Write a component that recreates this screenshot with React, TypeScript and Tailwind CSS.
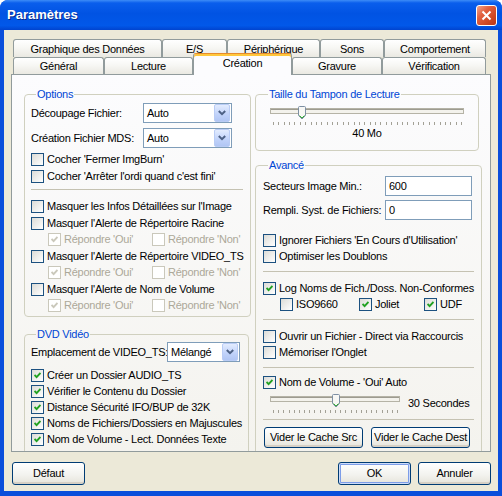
import type { ReactNode } from "react";

// Windows XP style settings dialog (ImgBurn "Création" page)

type CheckProps = {
  label: string;
  checked?: boolean;
  disabled?: boolean;
  className?: string;
};

const CheckBox = ({ checked, disabled }: { checked?: boolean; disabled?: boolean }) => (
  <span
    className={
      disabled
        ? "flex h-[13px] w-[13px] shrink-0 items-center justify-center border border-[#CAC8BB] bg-white"
        : "flex h-[13px] w-[13px] shrink-0 items-center justify-center border border-[#1C5180] bg-[linear-gradient(135deg,#DCDCD7,#FFFFFF)]"
    }
  >
    {checked && (
      <svg width="7" height="7" viewBox="0 0 7 7">
        <path
          d="M0.5 3 L2.6 5.2 L6.5 1"
          fill="none"
          stroke={disabled ? "#CAC8BB" : "#21A121"}
          strokeWidth="1.9"
        />
      </svg>
    )}
  </span>
);

const CheckRow = ({ label, checked, disabled, className = "" }: CheckProps) => (
  <div className={`flex items-center gap-[3px] whitespace-nowrap ${className}`}>
    <CheckBox checked={checked} disabled={disabled} />
    <span className={disabled ? "text-[#ACA899]" : "text-black"}>{label}</span>
  </div>
);

const Combo = ({ value, className = "" }: { value: string; className?: string }) => (
  <div
    className={`flex h-[20px] shrink-0 items-center border border-[#7F9DB9] bg-white pl-[3px] pr-px ${className}`}
  >
    <span className="flex-1">{value}</span>
    <span className="flex h-[18px] w-[16px] items-center justify-center rounded-[2px] border border-[#B9CCF5] bg-[linear-gradient(to_bottom,#E3ECFE,#C0D2FA_60%,#B1C6F4)]">
      <svg width="8" height="6" viewBox="0 0 8 6">
        <path d="M0.8 1 L4 4.2 L7.2 1" fill="none" stroke="#4D6185" strokeWidth="2" />
      </svg>
    </span>
  </div>
);

const TextBox = ({ value }: { value: string }) => (
  <div className="flex h-[20px] w-[87px] items-center border border-[#7F9DB9] bg-white pl-[3px]">
    {value}
  </div>
);

const Group = ({
  title,
  className = "",
  children,
}: {
  title: string;
  className?: string;
  children: ReactNode;
}) => (
  <fieldset className={`rounded-[4px] border border-[#D0D0BF] px-[6px] ${className}`}>
    <legend className="ml-[5px] px-px leading-[13px] text-[#0046D5]">{title}</legend>
    {children}
  </fieldset>
);

const Separator = ({ className = "" }: { className?: string }) => (
  <div className={`h-px bg-[#C5C2B2] ${className}`} />
);

const XpButton = ({
  label,
  className = "",
  primary,
}: {
  label: string;
  className?: string;
  primary?: boolean;
}) => (
  <button
    className={
      primary
        ? `flex items-center justify-center whitespace-nowrap rounded-[3px] border border-[#003C74] bg-[linear-gradient(to_bottom,#FFFFFF,#F3F3EF_55%,#E6E4DA)] shadow-[inset_0_0_0_1px_#CEDCF9,inset_0_0_0_2px_#7D9DE8] ${className}`
        : `flex items-center justify-center whitespace-nowrap rounded-[3px] border border-[#003C74] bg-[linear-gradient(to_bottom,#FFFFFF,#F3F3EF_55%,#E6E4DA)] shadow-[inset_0_-2px_0_#D6D0C5] ${className}`
    }
  >
    {label}
  </button>
);

// trackbar: channel, down-pointing thumb, tick row
const Slider = ({
  width,
  trackEnd,
  thumbX,
  ticks,
}: {
  width: number;
  trackEnd: number;
  thumbX: number;
  ticks: number;
}) => {
  const start = 7;
  const step = (trackEnd - start - 6) / (ticks - 1);
  return (
    <svg width={width} height="24" viewBox={`0 0 ${width} 24`} className="shrink-0">
      <rect x={start + 0.5} y="5.5" width={trackEnd - start - 1} height="5" fill="#F3F2EC" stroke="#B5B3A6" />
      <line x1={start + 1} y1="6.5" x2={trackEnd - 1} y2="6.5" stroke="#9D9B90" />
      <path
        d={`M${thumbX + 0.5} 4.5 Q${thumbX + 0.5} 3.5 ${thumbX + 1.5} 3.5 H${thumbX + 6.5} Q${thumbX + 7.5} 3.5 ${thumbX + 7.5} 4.5 V12.5 L${thumbX + 4} 16 L${thumbX + 0.5} 12.5 Z`}
        fill="#F7F7F4"
        stroke="#7D8FA3"
      />
      <path
        d={`M${thumbX + 1.5} 12.5 L${thumbX + 4} 15 L${thumbX + 6.5} 12.5`}
        fill="none"
        stroke="#35B035"
      />
      {Array.from({ length: ticks }).map((_, i) => (
        <line
          key={i}
          x1={start + 3 + Math.round(i * step) + 0.5}
          y1="19"
          x2={start + 3 + Math.round(i * step) + 0.5}
          y2="22"
          stroke="#A3A196"
        />
      ))}
    </svg>
  );
};

const topTabs = [
  { label: "Graphique des Données", w: "w-[149px]" },
  { label: "E/S", w: "w-[65px]" },
  { label: "Périphérique", w: "w-[93px]" },
  { label: "Sons", w: "w-[64px]" },
  { label: "Comportement", w: "w-[102px]" },
];

const bottomTabs = [
  { label: "Général", w: "w-[91px]" },
  { label: "Lecture", w: "w-[89px]" },
  { label: "Création", w: "w-[99px]", active: true },
  { label: "Gravure", w: "w-[90px]" },
  { label: "Vérification", w: "w-[104px]" },
];

const tabIdle =
  "flex h-full items-center justify-center rounded-t-[3px] border border-b-0 border-[#919B9C] bg-[linear-gradient(to_bottom,#FFFFFF,#F7F7F4_45%,#EAE9E2)]";
const tabActive =
  "relative z-10 -mb-px flex h-[22px] items-start justify-center rounded-t-[3px] border border-b-0 border-[#919B9C] border-t-[#E68B2C] bg-[#FCFCFE] pt-[3px] shadow-[inset_0_2px_0_#FFC73C]";

const App = () => {
  return (
    <div className="flex h-[496px] w-[502px] flex-col overflow-hidden rounded-t-[8px] bg-[#0A4EDB] font-['Liberation_Sans',Arial,sans-serif] text-[11px] leading-[13px] tracking-[-0.25px] text-black">
      {/* title bar */}
      <div className="flex h-[30px] shrink-0 items-center bg-[linear-gradient(to_bottom,#3D8CF7_0%,#0A5EEC_10%,#0153E3_45%,#0158E9_85%,#0044CF_100%)] pl-[7px] pr-[5px]">
        <span className="flex-1 text-[13px] font-bold leading-[16px] tracking-normal text-white [text-shadow:1px_1px_0_#0B2B8C]">
          Paramètres
        </span>
        <div className="flex h-[21px] w-[21px] items-center justify-center rounded-[3px] border border-white bg-[linear-gradient(135deg,#F2A58C_0%,#E2603F_35%,#CC4520_75%,#B9371A_100%)]">
          <svg width="11" height="11" viewBox="0 0 11 11">
            <path d="M1.5 1.5 L9.5 9.5 M9.5 1.5 L1.5 9.5" stroke="#FFFFFF" strokeWidth="2" />
          </svg>
        </div>
      </div>

      {/* dialog body */}
      <div className="mx-[4px] mb-[5px] flex flex-1 flex-col bg-[#ECE9D8] px-[7px] pt-[9px]">
        {/* tab strip */}
        <div className="flex h-[18px] pl-[2px]">
          {topTabs.map((t) => (
            <div key={t.label} className={`${tabIdle} ${t.w} pt-px`}>
              {t.label}
            </div>
          ))}
        </div>
        <div className="flex h-[17px] items-end pl-[2px]">
          {bottomTabs.map((t) =>
            t.active ? (
              <div key={t.label} className={`${tabActive} ${t.w}`}>
                {t.label}
              </div>
            ) : (
              <div key={t.label} className={`${tabIdle} ${t.w}`}>
                {t.label}
              </div>
            ),
          )}
        </div>

        {/* tab page */}
        <div className="flex h-[378px] gap-[7px] overflow-hidden border border-[#919B9C] bg-[linear-gradient(to_bottom,#FCFCFE,#F4F3EE)] pl-[12px] pt-[13px]">
          {/* left column */}
          <div className="flex w-[224px] shrink-0 flex-col">
            <Group title="Options" className="pb-[2px]">
              <div className="mt-[2px] flex items-center">
                <span className="w-[112px] shrink-0 whitespace-nowrap">Découpage Fichier:</span>
                <Combo value="Auto" className="w-[89px]" />
              </div>
              <div className="mt-[5px] flex items-center">
                <span className="w-[112px] shrink-0 whitespace-nowrap">Création Fichier MDS:</span>
                <Combo value="Auto" className="w-[89px]" />
              </div>
              <CheckRow label="Cocher 'Fermer ImgBurn'" className="mt-[3px] h-[17px]" />
              <CheckRow label="Cocher 'Arrêter l'ordi quand c'est fini'" className="h-[17px]" />
              <Separator className="mr-px mt-[4px]" />
              <CheckRow label="Masquer les Infos Détaillées sur l'Image" className="mt-[8.5px] h-[16.5px]" />
              <CheckRow label="Masquer l'Alerte de Répertoire Racine" className="h-[16.5px]" />
              <div className="flex h-[16.5px] pl-[17px]">
                <CheckRow label="Répondre 'Oui'" checked disabled className="w-[104px]" />
                <CheckRow label="Répondre 'Non'" disabled />
              </div>
              <CheckRow label="Masquer l'Alerte de Répertoire VIDEO_TS" className="h-[16.5px]" />
              <div className="flex h-[16.5px] pl-[17px]">
                <CheckRow label="Répondre 'Oui'" checked disabled className="w-[104px]" />
                <CheckRow label="Répondre 'Non'" disabled />
              </div>
              <CheckRow label="Masquer l'Alerte de Nom de Volume" className="h-[16.5px]" />
              <div className="flex h-[16.5px] pl-[17px]">
                <CheckRow label="Répondre 'Oui'" checked disabled className="w-[104px]" />
                <CheckRow label="Répondre 'Non'" disabled />
              </div>
            </Group>

            <Group title="DVD Vidéo" className="mt-[10.5px] h-[140px] shrink-0">
              <div className="mt-[1.5px] flex items-center">
                <span className="w-[136px] shrink-0 whitespace-nowrap">Emplacement de VIDEO_TS:</span>
                <Combo value="Mélangé" className="w-[73px]" />
              </div>
              <CheckRow label="Créer un Dossier AUDIO_TS" checked className="mt-[5px] h-[16px]" />
              <CheckRow label="Vérifier le Contenu du Dossier" checked className="h-[16px]" />
              <CheckRow label="Distance Sécurité IFO/BUP de 32K" checked className="h-[16px]" />
              <CheckRow label="Noms de Fichiers/Dossiers en Majuscules" checked className="h-[16px]" />
              <CheckRow label="Nom de Volume - Lect. Données Texte" checked className="h-[16px]" />
            </Group>
          </div>

          {/* right column */}
          <div className="flex w-[224px] shrink-0 flex-col">
            <Group title="Taille du Tampon de Lecture" className="px-[7px] pb-[10px]">
              <div className="mt-[2px]">
                <Slider width={208} trackEnd={201} thumbX={35} ticks={36} />
              </div>
              <div className="text-center">40 Mo</div>
            </Group>

            <Group title="Avancé" className="mt-[8px] h-[300px] shrink-0 px-[7px]">
              <div className="mt-[4px] flex items-center">
                <span className="w-[122px] shrink-0 whitespace-nowrap">Secteurs Image Min.:</span>
                <TextBox value="600" />
              </div>
              <div className="mt-[4px] flex items-center">
                <span className="w-[122px] shrink-0 whitespace-nowrap">Rempli. Syst. de Fichiers:</span>
                <TextBox value="0" />
              </div>
              <CheckRow label="Ignorer Fichiers 'En Cours d'Utilisation'" className="mt-[12.5px] h-[16px]" />
              <CheckRow label="Optimiser les Doublons" className="h-[16px]" />
              <Separator className="mt-[6.5px]" />
              <CheckRow label="Log Noms de Fich./Doss. Non-Conformes" checked className="mt-[8.5px] h-[16px]" />
              <div className="flex h-[16px] pl-[17px]">
                <CheckRow label="ISO9660" className="w-[79px]" />
                <CheckRow label="Joliet" checked className="w-[65px]" />
                <CheckRow label="UDF" checked />
              </div>
              <Separator className="mt-[6px]" />
              <CheckRow label="Ouvrir un Fichier - Direct via Raccourcis" className="mt-[9px] h-[16px]" />
              <CheckRow label="Mémoriser l'Onglet" className="h-[16px]" />
              <Separator className="mt-[6.5px]" />
              <CheckRow label="Nom de Volume - 'Oui' Auto" checked className="mt-[6.5px] h-[16px]" />
              <div className="flex items-start gap-[4px]">
                <Slider width={141} trackEnd={137} thumbX={69} ticks={25} />
                <span className="mt-[6.5px] whitespace-nowrap">30 Secondes</span>
              </div>
              <Separator className="mt-[4px]" />
              <div className="mt-[7px] flex gap-[8px] pl-[1px]">
                <XpButton label="Vider le Cache Src" className="h-[21px] w-[99px]" />
                <XpButton label="Vider le Cache Dest" className="h-[21px] w-[99px]" />
              </div>
            </Group>
          </div>
        </div>

        {/* dialog buttons */}
        <div className="mt-[10px] flex pl-[1px]">
          <XpButton label="Défaut" className="h-[23px] w-[73px]" />
          <div className="flex-1" />
          <XpButton label="OK" primary className="h-[23px] w-[73px]" />
          <XpButton label="Annuler" className="ml-[7px] h-[23px] w-[73px]" />
        </div>
      </div>
    </div>
  );
};

export default App;
